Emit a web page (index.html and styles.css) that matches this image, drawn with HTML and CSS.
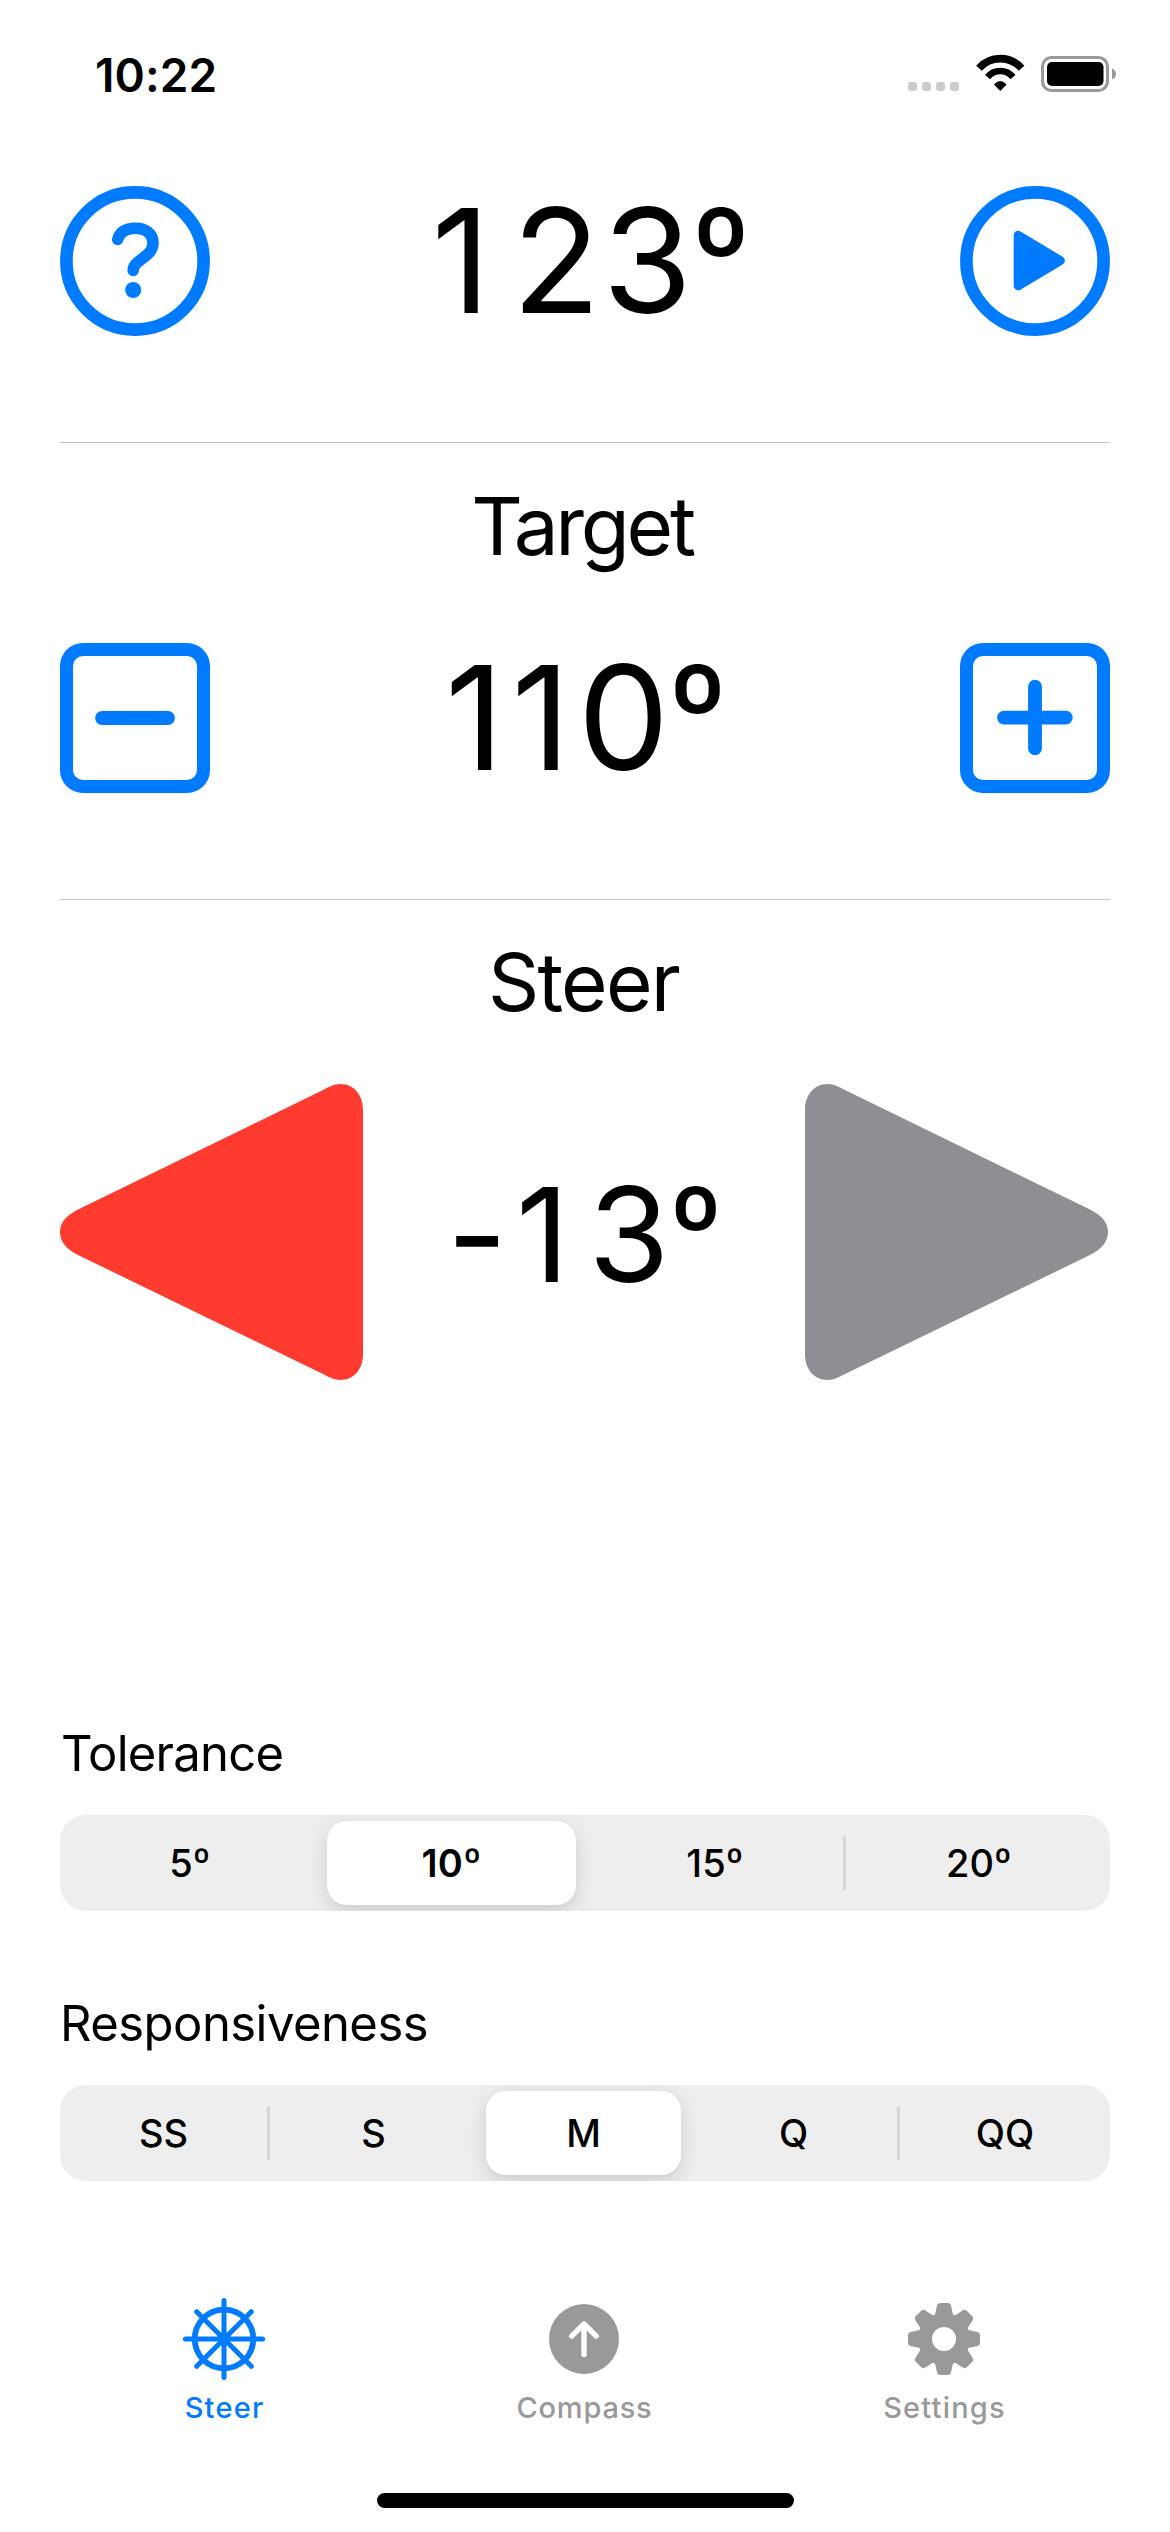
FILE: index.html
```html
<!DOCTYPE html>
<html lang="en">
<head>
<meta charset="utf-8">
<title>Steer</title>
<link rel="stylesheet" href="styles.css">
</head>
<body>
<div class="screen">
  <header class="status">
    <span class="time">10:22</span>
    <div class="indicators">
      <span class="signal"><i></i><i></i><i></i><i></i></span>
      <svg class="wifi" viewBox="0 0 49 36" fill="none" stroke="#000">
        <path d="M3 13.2A28.4 28.4 0 0 1 45.5 13.2" stroke-width="7.6"/>
        <path d="M11.6 22.1A16.1 16.1 0 0 1 36.9 22.1" stroke-width="6.6"/>
        <path d="M18.4 29.6Q24.2 23.6 30.1 29.6L24.2 35.4Z" fill="#000" stroke-width="1" stroke-linejoin="round"/>
      </svg>
      <svg class="battery" viewBox="0 0 75 36">
        <rect x="1.5" y="1.5" width="65" height="33" rx="9" fill="none" stroke="#999" stroke-width="3"/>
        <rect x="6" y="6" width="56.5" height="24" rx="5"/>
        <path d="M71 12.5Q75 14 75 18T71 23.5Z" fill="#999"/>
      </svg>
    </div>
  </header>

  <main class="content">
    <section class="row heading-row">
      <svg class="button" viewBox="0 0 150 150" fill="none" stroke="currentColor">
        <circle cx="75" cy="75" r="68.6" stroke-width="12.6"/>
        <path d="M57.7 53.5C60 45.5 66 42.3 75.5 42.3C86 42.3 93 48 93 56.5C93 64.5 88.5 68 82.5 72.5C76.5 77 73.2 79.5 73.2 84.5" stroke-width="11.5" stroke-linecap="round"/>
        <circle cx="73.2" cy="104" r="8" fill="currentColor" stroke="none"/>
      </svg>
      <div class="readout current"><span class="d1">1</span><span class="d2">2</span><span class="d3">3</span><span class="deg">º</span></div>
      <svg class="button" viewBox="0 0 150 150" fill="none" stroke="currentColor">
        <circle cx="75" cy="75" r="68.6" stroke-width="12.6"/>
        <path d="M58.2 49.3L100.3 74.6L58.2 99.8Z" fill="currentColor" stroke-width="9" stroke-linejoin="round"/>
      </svg>
    </section>

    <h2 class="title title-target">Target</h2>
    <section class="row target-row">
      <svg class="button" viewBox="0 0 150 150" fill="none" stroke="currentColor">
        <rect x="6.5" y="6.5" width="137" height="137" rx="16.5" stroke-width="13"/>
        <path d="M42 75H108" stroke-width="13.8" stroke-linecap="round"/>
      </svg>
      <div class="readout target"><span class="d1">1</span><span class="d2">1</span><span class="d3">0</span><span class="deg">º</span></div>
      <svg class="button" viewBox="0 0 150 150" fill="none" stroke="currentColor">
        <rect x="6.5" y="6.5" width="137" height="137" rx="16.5" stroke-width="13"/>
        <path d="M44 74.6H105.8M75 43.6V105.4" stroke-width="13.8" stroke-linecap="round"/>
      </svg>
    </section>

    <h2 class="title title-steer">Steer</h2>
    <section class="row steer-row">
      <svg class="arrow port" viewBox="0 0 303 296"><path d="M303 26C303 11 294 0 280.5 0C274 0 269 3 264 5.5L18 125.5C7 131 0 138 0 148S7 165.5 18 171L264 290.5C269 293 274 296 280.5 296C294 296 303 285 303 270Z"/></svg>
      <div class="readout delta"><span class="d1">-</span><span class="d2">1</span><span class="d3">3</span><span class="deg">º</span></div>
      <svg class="arrow starboard" viewBox="0 0 303 296"><path d="M0 26C0 11 9 0 22.5 0C29 0 34 3 39 5.5L285 125.5C296 131 303 138 303 148S296 165.5 285 171L39 290.5C34 293 29 296 22.5 296C9 296 0 285 0 270Z"/></svg>
    </section>

    <h3 class="label label-tolerance">Tolerance</h3>
    <div class="segments four">
      <div class="segment"><span>5<span class="deg">º</span></span></div>
      <div class="segment selected"><span>10<span class="deg">º</span></span></div>
      <div class="segment divided"><span>15<span class="deg">º</span></span></div>
      <div class="segment"><span>20<span class="deg">º</span></span></div>
    </div>

    <h3 class="label label-response">Responsiveness</h3>
    <div class="segments five">
      <div class="segment divided"><span>SS</span></div>
      <div class="segment"><span>S</span></div>
      <div class="segment selected"><span>M</span></div>
      <div class="segment divided"><span>Q</span></div>
      <div class="segment"><span>QQ</span></div>
    </div>
  </main>

  <nav class="tabs">
    <a class="tab active">
      <svg class="tab-icon" viewBox="-42 -42 84 84" fill="none" stroke="currentColor" stroke-width="5" stroke-linecap="round">
        <circle r="29.3" stroke-width="5.8"/>
        <path d="M0-38.6V38.6M-38.6 0H38.6M-27.3-27.3L27.3 27.3M27.3-27.3L-27.3 27.3"/>
        <circle r="5" fill="currentColor" stroke="none"/>
      </svg>
      <span class="tab-name">Steer</span>
    </a>
    <a class="tab">
      <svg class="tab-icon" viewBox="-42 -42 84 84">
        <circle r="35" fill="currentColor"/>
        <path d="M0-15V15.5M-12.3-2.8L0-15L12.3-2.8" fill="none" stroke="#fff" stroke-width="5.4" stroke-linecap="round" stroke-linejoin="round"/>
      </svg>
      <span class="tab-name compass">Compass</span>
    </a>
    <a class="tab">
      <svg class="tab-icon" viewBox="-42 -42 84 84" fill="currentColor">
        <defs><path id="tooth" d="M-10-22L-9-24L-7-33.4Q-6.5-36-4-36H4Q6.5-36 7-33.4L9-24L10-22Z"/></defs>
        <circle r="19" fill="none" stroke="currentColor" stroke-width="14"/>
        <use href="#tooth"/><use href="#tooth" transform="rotate(45)"/><use href="#tooth" transform="rotate(90)"/><use href="#tooth" transform="rotate(135)"/>
        <use href="#tooth" transform="rotate(180)"/><use href="#tooth" transform="rotate(225)"/><use href="#tooth" transform="rotate(270)"/><use href="#tooth" transform="rotate(315)"/>
      </svg>
      <span class="tab-name">Settings</span>
    </a>
  </nav>
  <div class="home"></div>
</div>
</body>
</html>
```
FILE: styles.css
```css
* { box-sizing: border-box; }
body {
  margin: 0;
  background: #fff;
  color: #000;
  font-family: "Inter", "Liberation Sans", sans-serif;
}
svg { display: block; flex: none; overflow: visible; }
h2, h3 { margin: 0; font-weight: 400; }
.screen { width: 1170px; height: 2532px; overflow: hidden; }

/* Status bar */
.status {
  height: 186px;
  padding: 45px 54px 0 95px;
  display: flex;
  justify-content: space-between;
  align-items: flex-start;
}
.time { font-size: 46px; font-weight: 600; line-height: 60px; letter-spacing: 0.1px; }
.indicators { display: flex; align-items: flex-end; padding-top: 10px; }
.signal { display: flex; gap: 5px; margin-right: 17px; }
.signal i { width: 9px; height: 9px; border-radius: 3px; background: #ccc; }
.wifi { width: 49px; height: 36px; margin-right: 16px; }
.battery { width: 75px; height: 36px; position: relative; top: 1px; }

/* Readouts */
.content { padding: 0 60px; }
.row { display: flex; align-items: center; }
.button { width: 150px; height: 150px; color: #007aff; }
.readout {
  flex: 1;
  text-align: center;
  white-space: nowrap;
  font-size: 145px;
  line-height: 150px;
  font-kerning: none;
}
.deg { font-size: 0.9em; line-height: 0; vertical-align: 0.09em; }
.readout .deg { font-weight: 390; }
.heading-row, .target-row { padding-bottom: 106px; border-bottom: 1px solid #c6c6c8; }
.current { padding-left: 12px; }
.current .d1 { letter-spacing: 21.5px; }
.current .d2 { letter-spacing: 2px; }
.current .d3 { letter-spacing: -0.5px; }
.target { padding-left: 2px; }
.target .d1 { letter-spacing: 7.6px; }
.target .d2 { letter-spacing: 7.2px; }
.target .d3 { letter-spacing: -1px; }
.delta { font-size: 131px; padding: 5px 0 0 2px; }
.delta .d1 { letter-spacing: 8.7px; }
.delta .d2 { letter-spacing: 19px; }

.title { font-size: 80px; line-height: 91px; text-align: center; }
.title-target { margin: 37px 0 72px; padding-right: 6px; letter-spacing: -3.3px; }
.title-steer { margin: 36px 0 57px; padding-right: 3px; letter-spacing: -1.8px; }

.arrow { width: 303px; height: 296px; }
.port { fill: #ff3b30; }
.starboard { fill: #8e8e93; margin-right: 2.5px; }

/* Segmented controls */
.label { font-size: 49px; line-height: 60px; }
.label-tolerance { margin: 344px 0 31px; padding-left: 1px; letter-spacing: -0.75px; }
.label-response { margin: 83px 0 31px; letter-spacing: -0.55px; }
.segments {
  height: 96px;
  display: grid;
  border-radius: 26px;
  background: #eee;
  overflow: hidden;
  font-size: 38px;
  font-weight: 460;
}
.four { grid-template-columns: repeat(4, 1fr); }
.five { grid-template-columns: repeat(5, 1fr); }
.segment {
  position: relative;
  display: flex;
  align-items: center;
  justify-content: center;
  padding-right: 3px;
}
.segment .deg { font-size: 1em; vertical-align: 0.02em; }
.segment:last-child { padding-right: 0; }
.divided::after {
  content: "";
  position: absolute;
  right: 0;
  top: 21px;
  width: 3px;
  height: 54px;
  border-radius: 1.5px;
  background: #d5d5d6;
}
.four .divided::after { right: 1.5px; }
.selected {
  margin: 6px 9px 6px 4.5px;
  padding-right: 0;
  border-radius: 20px;
  background: #fff;
  font-weight: 590;
  letter-spacing: 0.4px;
  box-shadow: 0 6px 20px rgba(0, 0, 0, 0.14), 0 3px 4px rgba(0, 0, 0, 0.02);
}
.five .selected { margin-left: 6px; font-weight: 540; letter-spacing: 0; }

/* Tab bar */
.tabs {
  display: grid;
  grid-template-columns: repeat(3, 360px);
  padding-left: 44px;
  margin-top: 116px;
}
.tab { display: flex; flex-direction: column; align-items: center; color: #999; }
.active { color: #007aff; }
.tab-icon { width: 84px; height: 84px; }
.tab-name {
  margin-top: 8px;
  padding-left: 1px;
  font-size: 29px;
  font-weight: 500;
  line-height: 37px;
  letter-spacing: 1.2px;
}
.compass { letter-spacing: 0.8px; }
.home { width: 417px; height: 15px; margin: 67px auto 0; border-radius: 7.5px; background: #000; }
```
